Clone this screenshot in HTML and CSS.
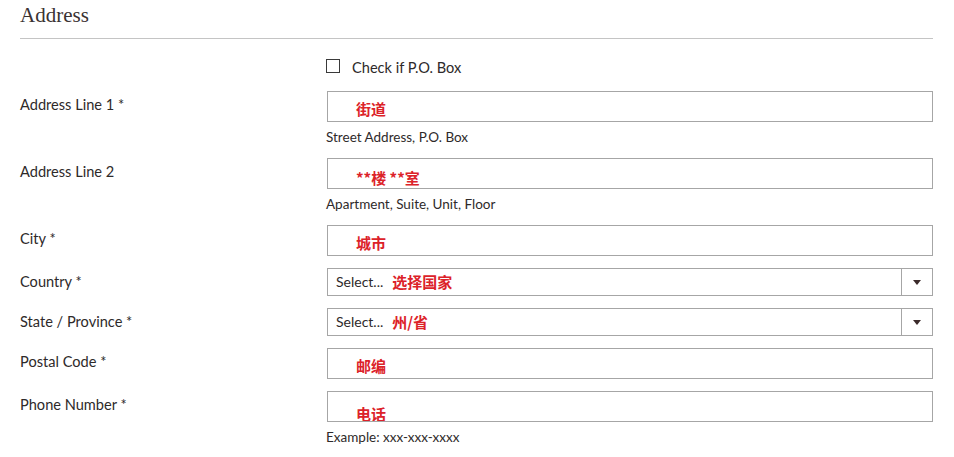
FILE: index.html
```html
<!DOCTYPE html>
<html lang="en">
<head>
<meta charset="utf-8">
<title>Address</title>
<link rel="stylesheet" href="styles.css">
</head>
<body>
<div class="page">
  <h2 class="section-title">Address</h2>
  <div class="form">
    <div class="row row-check">
      <div class="label"></div>
      <div class="field">
        <label class="check"><span class="box"></span><span>Check if P.O. Box</span></label>
      </div>
    </div>
    <div class="row">
      <div class="label">Address Line 1 *</div>
      <div class="field">
        <div class="input"><span class="note">街道</span></div>
        <div class="hint">Street Address, P.O. Box</div>
      </div>
    </div>
    <div class="row">
      <div class="label">Address Line 2</div>
      <div class="field">
        <div class="input input-low"><span class="note">**楼 **室</span></div>
        <div class="hint">Apartment, Suite, Unit, Floor</div>
      </div>
    </div>
    <div class="row">
      <div class="label">City *</div>
      <div class="field">
        <div class="input"><span class="note">城市</span></div>
      </div>
    </div>
    <div class="row">
      <div class="label">Country *</div>
      <div class="field">
        <div class="select">
          <div class="select-value"><span class="select-text">Select...</span><span class="note">选择国家</span></div>
          <div class="select-arrow"><span class="tri"></span></div>
        </div>
      </div>
    </div>
    <div class="row">
      <div class="label">State / Province *</div>
      <div class="field">
        <div class="select">
          <div class="select-value"><span class="select-text">Select...</span><span class="note">州/省</span></div>
          <div class="select-arrow"><span class="tri"></span></div>
        </div>
      </div>
    </div>
    <div class="row">
      <div class="label">Postal Code *</div>
      <div class="field">
        <div class="input"><span class="note">邮编</span></div>
      </div>
    </div>
    <div class="row">
      <div class="label">Phone Number *</div>
      <div class="field">
        <div class="input input-lowest"><span class="note">电话</span></div>
        <div class="hint">Example: xxx-xxx-xxxx</div>
      </div>
    </div>
  </div>
</div>
</body>
</html>
```

FILE: styles.css
```css
html, body {
  margin: 0;
  padding: 0;
  background: #ffffff;
}

body {
  font-family: Lato, "Open Sans", "Noto Sans CJK SC", sans-serif;
  color: #2e2a2a;
}

.page {
  width: 913px;
  padding-left: 20px;
}

.section-title {
  margin: 0;
  padding: 3px 0 11px;
  font-family: "Liberation Serif", "Times New Roman", serif;
  font-weight: normal;
  font-size: 21px;
  line-height: 24px;
  color: #3a3232;
  border-bottom: 1px solid #c4c4c4;
}

.form {
  display: flex;
  flex-direction: column;
}

.row {
  display: grid;
  grid-template-columns: 307px 606px;
  margin-bottom: 12px;
}

.row-check {
  margin-top: 19px;
  margin-bottom: 13px;
}

.label {
  padding-top: 4px;
  font-size: 14.6px;
  line-height: 20px;
}

.check {
  display: flex;
  align-items: flex-start;
  gap: 12px;
  font-size: 14.6px;
  line-height: 20px;
  margin-left: -1px;
}

.box {
  width: 12px;
  height: 12px;
  margin-top: 1px;
  border: 1px solid #3a3a3a;
  background: #fff;
  flex: none;
}

.input {
  box-sizing: border-box;
  height: 31px;
  border: 1px solid #a6a6a6;
  padding: 7px 0 0 28px;
  overflow: hidden;
  line-height: 20px;
}

.input-low {
  padding-top: 9px;
}

.input-lowest {
  padding-top: 12px;
}

.note {
  font-family: "Noto Sans CJK SC", sans-serif;
  font-size: 15px;
  font-weight: bold;
  color: #dc2229;
  line-height: 20px;
}

.hint {
  margin-top: 6px;
  margin-left: -1px;
  font-size: 13.5px;
  line-height: 18px;
}

.select {
  box-sizing: border-box;
  height: 28px;
  border: 1px solid #a6a6a6;
  display: flex;
}

.select-value {
  flex: 1;
  display: flex;
  align-items: center;
  padding-left: 8px;
  gap: 9px;
  line-height: 20px;
}

.select-text {
  font-size: 14px;
}

.select-arrow {
  width: 30px;
  border-left: 1px solid #a6a6a6;
  display: flex;
  align-items: center;
  justify-content: center;
}

.tri {
  width: 0;
  height: 0;
  border-left: 4px solid transparent;
  border-right: 4px solid transparent;
  border-top: 5px solid #3b2a2a;
}
```
